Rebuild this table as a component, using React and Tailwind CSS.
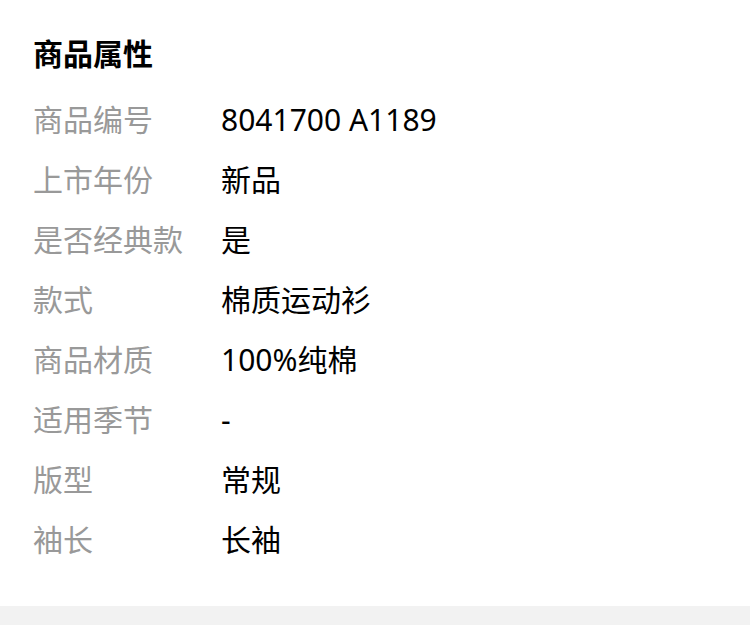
const attrs = [
  { label: '商品编号', value: '8041700 A1189' },
  { label: '上市年份', value: '新品' },
  { label: '是否经典款', value: '是' },
  { label: '款式', value: '棉质运动衫' },
  { label: '商品材质', value: '100%纯棉' },
  { label: '适用季节', value: '-' },
  { label: '版型', value: '常规' },
  { label: '袖长', value: '长袖' },
]

export default function App() {
  return (
    <div
      className="w-[750px] h-[625px] bg-white overflow-hidden flex flex-col"
      style={{ fontFamily: '"Noto Sans", "Noto Sans CJK SC", sans-serif' }}
    >
      {/* Attributes card */}
      <div className="pl-[33px] pt-[33px] pb-[37px]">
        <h2 className="h-[40px] flex items-center text-[30px] font-bold text-black">商品属性</h2>
        <div className="mt-[16px] flex flex-col">
          {attrs.map((a) => (
            <div key={a.label} className="h-[60px] flex items-center text-[30px]">
              <span className="w-[188px] text-[#999999]">{a.label}</span>
              <span className="text-black">{a.value}</span>
            </div>
          ))}
        </div>
      </div>
      <div className="flex-1 bg-[#f2f2f2]" />
    </div>
  )
}
